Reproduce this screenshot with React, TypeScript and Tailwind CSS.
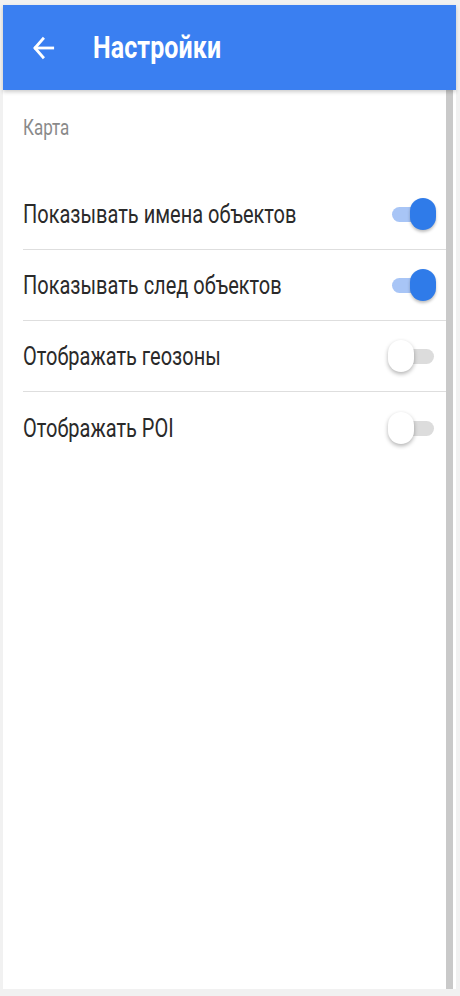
import { useState } from 'react'

const rows = [
  { label: 'Показывать имена объектов', on: true },
  { label: 'Показывать след объектов', on: true },
  { label: 'Отображать геозоны', on: false },
  { label: 'Отображать POI', on: false },
]

function Toggle({ on, onClick }: { on: boolean; onClick: () => void }) {
  return (
    <button onClick={onClick} className="relative w-[48px] h-[34px] shrink-0">
      <span className={`absolute left-[4px] right-[2px] top-[10px] h-[15px] rounded-full ${on ? 'bg-[#a8c5f6]' : 'bg-[#dcdcdc]'}`} />
      <span
        className={`absolute top-[1px] w-[26px] h-[32px] rounded-full ${on ? 'right-0 bg-[#2f7be9] shadow-[0_2px_3px_rgba(0,0,0,0.25)]' : 'left-0 bg-white shadow-[0_2px_4px_rgba(0,0,0,0.3)]'}`}
      />
    </button>
  )
}

export default function App() {
  const [state, setState] = useState(rows.map(r => r.on))

  return (
    <div className="w-full h-[996px] bg-[#f1f1f1] pt-[5px] pl-[3px] pr-[4px] pb-[7px]" style={{ fontFamily: 'Roboto, "Noto Sans", sans-serif' }}>
      <div className="h-full flex flex-col bg-white">
        {/* header */}
        <div className="relative z-10 h-[85px] shrink-0 bg-[#3a7ff1] flex items-center shadow-[0_2px_4px_rgba(0,0,0,0.2)]">
          <svg className="ml-[27px] w-[26px] h-[28px]" viewBox="0 0 24 26" fill="none" stroke="white" strokeWidth="2.6" strokeLinecap="square">
            <path d="M21 13H5" />
            <path d="M12 4.5 4.5 13l7.5 8.5" />
          </svg>
          <h1 className="ml-[37px] inline-block scale-y-125 text-white text-[25px] font-bold tracking-[0.1px]">Настройки</h1>
        </div>

        {/* body */}
        <div className="flex-1 flex">
          <div className="flex-1">
            <div className="h-[89px] pl-[20px] pt-[26px] text-[17px] text-[#8a8a8a]">
              <span className="inline-block scale-y-125">Карта</span>
            </div>
            {rows.map((r, i) => (
              <div key={i} className={`ml-[20px] h-[71px] flex items-center justify-between pr-[10px] ${i < rows.length - 1 ? 'border-b border-[#dedede]' : ''}`}>
                <span className="inline-block scale-y-125 text-[20px] text-[#2a2a2a]">{r.label}</span>
                <Toggle on={state[i]} onClick={() => setState(s => s.map((v, j) => (j === i ? !v : v)))} />
              </div>
            ))}
          </div>
          <div className="w-[7px] bg-[#c9c9c9]" />
          <div className="w-[3px] bg-white" />
        </div>
      </div>
    </div>
  )
}
